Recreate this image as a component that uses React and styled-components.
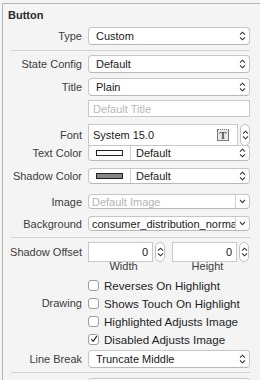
import React from 'react'
import styled, { createGlobalStyle } from 'styled-components'

const Global = createGlobalStyle`
  html, body { margin: 0; padding: 0; background: #f4f4f4; }
  body { font-family: "Liberation Sans", Arial, sans-serif; font-size: 11px; color: #1e1e1e; }
`

const Outer = styled.div`
  width: 260px;
  height: 380px;
  padding: 3px 0 0 2px;
  box-sizing: border-box;
  overflow: hidden;
  background: #f4f4f4;
`

const Panel = styled.div`
  border-top: 1px solid #b4b4b4;
  border-left: 1px solid #b4b4b4;
  height: 400px;
  box-sizing: border-box;
`

const Header = styled.div`
  font-weight: 700;
  font-size: 11px;
  color: #2a2a2a;
  padding: 5px 0 0 5px;
  height: 21px;
  box-sizing: border-box;
`

const Row = styled.div`
  display: grid;
  grid-template-columns: 79px 162px;
  column-gap: 6px;
  align-items: center;
  height: ${p => p.$h || 18}px;
  margin-top: ${p => p.$mt || 0}px;
`

const Label = styled.div`
  text-align: right;
  color: #3c3c3c;
  white-space: nowrap;
`

const Sep = styled.div`
  margin: ${p => p.$mt || 0}px 0 0 8px;
  width: 239px;
  height: 1px;
  background: #d2d2d2;
`

const Popup = styled.div`
  position: relative;
  height: 100%;
  background: #fff;
  border: 1px solid #c6c6c6;
  border-bottom-color: #b8b8b8;
  border-radius: 4px;
  box-sizing: border-box;
  display: flex;
  align-items: center;
  padding-left: ${p => p.$pl || 7}px;
  color: #1a1a1a;
  overflow: hidden;
`

const PopText = styled.span`
  flex: 1;
  white-space: nowrap;
  overflow: hidden;
  color: ${p => (p.$muted ? '#b4b4b4' : '#1a1a1a')};
`

const ArrowSlot = styled.div`
  width: ${p => p.$w || 14}px;
  height: 100%;
  display: flex;
  align-items: center;
  justify-content: center;
  flex-shrink: 0;
  border-left: ${p => (p.$divided ? '1px solid #d0d0d0' : 'none')};
`

const TextField = styled.div`
  height: 100%;
  background: #fff;
  border: 1px solid #c8c8c8;
  box-sizing: border-box;
  display: flex;
  align-items: center;
  justify-content: ${p => (p.$right ? 'flex-end' : 'flex-start')};
  padding: 0 ${p => (p.$right ? 4 : 3)}px 0 ${p => (p.$right ? 0 : 4)}px;
  color: ${p => (p.$muted ? '#b8b8b8' : '#1a1a1a')};
  width: ${p => (p.$w ? p.$w + 'px' : 'auto')};
  flex: ${p => (p.$w ? 'none' : 1)};
`

const Line = styled.div`
  display: flex;
  align-items: center;
  height: 100%;
  gap: ${p => p.$gap || 2}px;
`

const Stepper = styled.div`
  width: 10px;
  height: ${p => p.$h || 20}px;
  border: 1px solid #c2c2c2;
  border-radius: 5px;
  background: #fff;
  box-sizing: border-box;
  display: flex;
  align-items: center;
  justify-content: center;
  flex-shrink: 0;
`

const FontIcon = styled.div`
  width: 12px;
  height: 12px;
  border: 1px solid #7a7a7a;
  border-top-style: dotted;
  box-sizing: border-box;
  background: #e9e9e9;
  display: flex;
  align-items: center;
  justify-content: center;
  font-family: "Liberation Serif", serif;
  font-weight: 700;
  font-size: 11px;
  color: #555;
  margin-right: 5px;
`

const Well = styled.div`
  width: 41px;
  height: 100%;
  display: flex;
  align-items: center;
  justify-content: center;
  border-right: 1px solid #d0d0d0;
  flex-shrink: 0;
  margin-left: -7px;
  margin-right: 5px;
`

const Swatch = styled.div`
  width: 27px;
  height: 6px;
  border: 1px solid #222;
  background: ${p => p.$color};
  box-sizing: border-box;
`

const SubLabels = styled.div`
  display: grid;
  grid-template-columns: 65px 65px;
  column-gap: 19px;
  margin: -2px 0 0 88px;
  height: 14px;
  align-items: center;
  color: #3c3c3c;
  & > span { text-align: center; }
`

const CheckRow = styled.label`
  display: flex;
  align-items: center;
  gap: 5px;
  color: #1e1e1e;
  font-size: 11.6px;
  white-space: nowrap;
`

const Box = styled.span`
  width: 11px;
  height: 11px;
  border: 1px solid #9e9e9e;
  border-radius: 3px;
  background: #fff;
  box-sizing: border-box;
  display: flex;
  align-items: center;
  justify-content: center;
  flex-shrink: 0;
`

const UpDown = () => (
  <svg width="7" height="10" viewBox="0 0 7 10">
    <path d="M1 3.6 L3.5 1.2 L6 3.6 M1 6.4 L3.5 8.8 L6 6.4" fill="none" stroke="#333" strokeWidth="1.1" />
  </svg>
)

const Down = () => (
  <svg width="7" height="5" viewBox="0 0 7 5">
    <path d="M1 1 L3.5 3.6 L6 1" fill="none" stroke="#444" strokeWidth="1.1" />
  </svg>
)

const Check = () => (
  <svg width="8" height="8" viewBox="0 0 8 8">
    <path d="M1.3 4.2 L3.2 6.3 L6.8 1.2" fill="none" stroke="#222" strokeWidth="1.2" />
  </svg>
)

const PopupField = ({ value, muted }) => (
  <Popup>
    <PopText $muted={muted}>{value}</PopText>
    <ArrowSlot><UpDown /></ArrowSlot>
  </Popup>
)

const ComboField = ({ value, muted }) => (
  <Popup $pl={3}>
    <PopText $muted={muted}>{value}</PopText>
    <ArrowSlot $divided $w={13}><Down /></ArrowSlot>
  </Popup>
)

const ColorField = ({ color }) => (
  <Popup>
    <Well><Swatch $color={color} /></Well>
    <PopText>Default</PopText>
    <ArrowSlot><UpDown /></ArrowSlot>
  </Popup>
)

const checks = [
  { label: 'Reverses On Highlight', on: false },
  { label: 'Shows Touch On Highlight', on: false, title: 'Drawing' },
  { label: 'Highlighted Adjusts Image', on: false },
  { label: 'Disabled Adjusts Image', on: true },
]

export default function App() {
  return (
    <>
      <Global />
      <Outer>
        <Panel>
          <Header>Button</Header>
          <Row $mt={2}><Label>Type</Label><PopupField value="Custom" /></Row>
          <Sep $mt={5} />
          <Row $mt={4}><Label>State Config</Label><PopupField value="Default" /></Row>
          <Row $mt={5}><Label>Title</Label><PopupField value="Plain" /></Row>
          <Row $mt={4} $h={17}><span /><TextField $muted>Default Title</TextField></Row>
          <Row $mt={7} $h={18}>
            <Label>Font</Label>
            <Line $gap={2}>
              <TextField>
                <PopText>System 15.0</PopText>
                <FontIcon>T</FontIcon>
              </TextField>
              <Stepper $h={22}><UpDown /></Stepper>
            </Line>
          </Row>
          <Row $mt={3} $h={16}><Label>Text Color</Label><ColorField color="#fff" /></Row>
          <Row $mt={7} $h={16}><Label>Shadow Color</Label><ColorField color="#868686" /></Row>
          <Row $mt={10} $h={15}><Label>Image</Label><ComboField value="Default Image" muted /></Row>
          <Row $mt={7} $h={15}><Label>Background</Label><ComboField value="consumer_distribution_normal" /></Row>
          <Sep $mt={6} />
          <Row $mt={4} $h={19}>
            <Label>Shadow Offset</Label>
            <Line $gap={2}>
              <TextField $right $w={65}>0</TextField>
              <Stepper><UpDown /></Stepper>
              <TextField $right $w={65} style={{ marginLeft: 5 }}>0</TextField>
              <Stepper><UpDown /></Stepper>
            </Line>
          </Row>
          <SubLabels><span>Width</span><span>Height</span></SubLabels>
          {checks.map((c, i) => (
            <Row key={c.label} $mt={i === 0 ? 3 : 0} $h={18}>
              <Label>{c.title || ''}</Label>
              <CheckRow>
                <Box>{c.on && <Check />}</Box>
                {c.label}
              </CheckRow>
            </Row>
          ))}
          <Row $mt={2} $h={18}><Label>Line Break</Label><PopupField value="Truncate Middle" /></Row>
          <Sep $mt={4} />
          <Row $mt={5} $h={18}><span /><Popup /></Row>
        </Panel>
      </Outer>
    </>
  )
}
